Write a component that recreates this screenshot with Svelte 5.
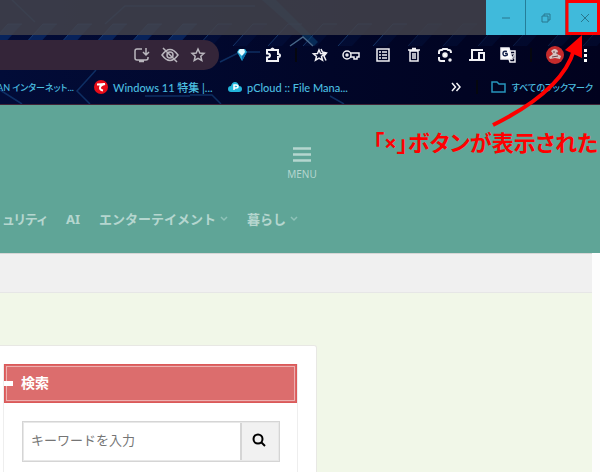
<script>
  const slashes = Array.from({ length: 18 }, (_, i) => i * 35 - 12);
</script>

<div class="screen">
  <header class="browser">
    <svg class="circuit" viewBox="0 0 600 104" preserveAspectRatio="xMinYMin slice" aria-hidden="true">
      <linearGradient id="glow" x1="0" x2="1" y1="0" y2="0">
        <stop offset="0" stop-color="#020c38" />
        <stop offset="0.55" stop-color="#010628" />
        <stop offset="1" stop-color="#01021e" />
      </linearGradient>
      <rect width="600" height="104" fill="url(#glow)" />
      {#each slashes as x}
        <path d="M{x} 46l20-22h14l-20 22z" fill="#0b2f70" opacity={x < 180 ? 0.65 : 0.15} />
        <path d="M{x} 46l20-22h14" stroke="#285d9d" fill="none" opacity={x < 400 ? 0.5 : 0.25} />
      {/each}
      <path d="M262 0h14l42 42-4 4z" fill="#0d5283" opacity=".45" />
      <path d="M290 46l13-9 10 9" stroke="#476788" fill="none" stroke-width="1.500" />
      <path d="M12 0l23 22M105 24l20-18h130M220 62l20-10h20M190 95h22l9 9M145 96h45M96 70L77 91l13 13M0 90l22 14M330 96l14 8" stroke="#174784" fill="none" stroke-width="1.500" opacity=".6" />
    </svg>

    <div class="titlebar">
      <div class="window-buttons">
        <button aria-label="Minimize"><svg viewBox="0 0 12 12" width="12" height="12"><path d="M2 6h8" /></svg></button>
        <button aria-label="Restore"><svg viewBox="0 0 12 12" width="12" height="12"><path d="M2 4h6v6H2zM4 4V2h6v6H8" /></svg></button>
        <button class="close" aria-label="Close"><svg viewBox="0 0 12 12" width="12" height="12"><path d="M2 2l8 8M10 2l-8 8" /></svg></button>
      </div>
    </div>

    <div class="toolbar">
      <div class="address">
        <button aria-label="Install"><svg viewBox="0 0 18 18"><path d="M9 3H4Q2 3 2 5v7q0 2 2 2h9q2 0 2-2v-1M6 15.500h5M13 2v7M10 6l3 3 3-3" /></svg></button>
        <button aria-label="Tracking protection"><svg viewBox="0 0 18 18"><path d="M1 9q8-11 16 0-8 11-16 0zM2 2l14 14" /><circle cx="9" cy="9" r="3" /></svg></button>
        <button aria-label="Bookmark"><svg viewBox="0 0 18 18"><path d="M9 3l1.800 4 4.200.400-3.200 2.900 1 4.200L9 12.300l-3.800 2.200 1-4.200L3 7.400 7.200 7z" /></svg></button>
      </div>
      <div class="extensions">
        <button aria-label="Gem"><svg viewBox="0 0 18 18"><path d="M4 6l2-3h6l2 3-5 9z" fill="#22a7d3" stroke="none" /><path d="M5 6l2-3h4l1 3-3 4z" fill="#e5fbff" stroke="none" /><path d="M9 10l5-4-5 9z" fill="#0c6da8" stroke="none" /></svg></button>
        <button aria-label="Extensions"><svg viewBox="0 0 18 18"><path d="M3 4h11v4q2 0 2 1.500T14 11v4H3v-3.500q3 0 3-2t-3-2z" stroke-width="2" /><path d="M7 3.500q1.500-2.500 3 0" /></svg></button>
      </div>
      <span class="rule"></span>
      <div class="pinned">
        <button aria-label="Favorites"><svg viewBox="0 0 18 18"><path d="M8 4l1.500 3.500 4 .3-3 2.600 1 3.800L8 12.200l-3.500 2 1-3.800-3-2.600 4-.3zM10 3l1.500 3 4 1-2.500 3 2 4.500" /></svg></button>
        <button aria-label="Passwords"><svg viewBox="0 0 18 18"><path d="M8.500 7H17v4h-2v2h-3v-2H8.500" /><circle cx="5" cy="9" r="4" /><circle cx="5" cy="9" r="1" /></svg></button>
        <button aria-label="Reading list"><svg viewBox="0 0 18 18"><path d="M3 3h12v12H3zM5 6h2M5 9h2M5 12h2M8 6h5M8 9h5M8 12h5" /></svg></button>
        <button aria-label="Delete"><svg viewBox="0 0 18 18"><path d="M5 5h8v10H5zM3 4h12M7 2.500h4M8 7v6M10 7v6" /></svg></button>
        <button aria-label="Lens"><svg viewBox="0 0 18 18"><path d="M3 8V6q0-2 2-2h1l1-1h4l1 1h1q2 0 2 3M3 11v2q0 2 2 2h4" stroke-width="2" /><circle cx="9" cy="9" r="2" fill="#fff" /><circle cx="14" cy="14" r="1" fill="#fff" /></svg></button>
        <button aria-label="Devices"><svg viewBox="0 0 18 18"><path d="M15 4H4v9M1 14h9M11 7h5v7h-5z" stroke-width="2" /></svg></button>
        <button aria-label="Translate"><svg viewBox="0 0 18 18"><path d="M2 2h8l3 11H2z" fill="#fff" /><path d="M11 5h5v11h-5l-1-3" /><path d="M8 5.500q-4-1-4 2t3 2q2 0 1-2H6" stroke="#17254c" /><path d="M12 8h4M14 7v1M15 9q-1 3-3 4M12.500 10l3 3" stroke-width="1" /></svg></button>
      </div>
      <span class="rule"></span>
      <div class="profile">
        <button aria-label="Profile"><svg viewBox="0 0 18 18"><circle cx="9" cy="9" r="9" fill="#c52b2c" stroke="none" /><path d="M5 5q4-4 7 0l-1 3 4 2-1 3-5-1-5 1-1-2 4-3z" fill="#d6c2c2" stroke="none" /><path d="M7 6h2M10 7h2M6 11l6-1" stroke="#6e3e46" stroke-width="1" /></svg></button>
        <button aria-label="More"><svg viewBox="0 0 18 18"><path d="M7 3h3v3H7zM7 8h3v3H7zM7 13h3v3H7z" fill="#fff" stroke="none" /></svg></button>
      </div>
    </div>

    <nav class="bookmarks" aria-label="Bookmarks">
      <a class="first" href="#internet">AN インターネット...</a>
      <a class="second" href="#windows"><svg width="14" height="14" viewBox="0 0 14 14"><circle cx="7" cy="7" r="7" fill="#e80c18" /><path d="M3 4.500l8-.5Q6 5 6 8q0 2 3 2.500" fill="none" stroke="#fff" stroke-width="2" /></svg>Windows 11 特集 |...</a>
      <a href="#pcloud"><svg width="14" height="12" viewBox="0 0 14 12"><path d="M3 11Q0 11 0 8q0-3 3-3 1-4 4-4t4 4q3 0 3 3t-3 3z" fill="#22b5da" /><path d="M6 9V4h2q2 0 2 1.500T8 7H6" fill="none" stroke="#fff" stroke-width="1.500" /></svg>pCloud :: File Mana...</a>
      <button class="more" aria-label="More bookmarks"><svg width="10" height="10" viewBox="0 0 10 10"><path d="M1 1l3.500 4L1 9M5.500 1L9 5 5.500 9" /></svg></button>
      <span class="rule"></span>
      <a class="all" href="#all"><svg width="16" height="14" viewBox="0 0 16 14"><path d="M1 2h5l2 2h6v8H1z" fill="none" stroke="#2795bd" stroke-width="1.500" /></svg>すべてのブックマーク</a>
    </nav>
  </header>

  <div class="hero">
    <button class="menu"><svg width="18" height="16" viewBox="0 0 18 16"><path d="M0 1.500h18M0 7.500h18M0 13.500h18" /></svg><span>MENU</span></button>
    <nav class="site-nav" aria-label="Categories">
      <a class="security" href="#security">ュリティ</a>
      <a href="#ai">AI</a>
      <a href="#entertainment">エンターテイメント<svg width="8" height="6" viewBox="0 0 8 6"><path d="M1 1l3 3 3-3" /></svg></a>
      <a href="#life">暮らし<svg width="8" height="6" viewBox="0 0 8 6"><path d="M1 1l3 3 3-3" /></svg></a>
    </nav>
  </div>

  <div class="body">
    <div class="crumbs"></div>
    <aside class="card">
      <section class="widget">
        <h2>検索</h2>
        <form onsubmit={(e) => e.preventDefault()}>
          <input type="text" aria-label="キーワード" placeholder="キーワードを入力" />
          <button aria-label="検索する"><svg width="14" height="14" viewBox="0 0 14 14"><circle cx="6" cy="6" r="4.500" /><path d="M9 9l4 4" /></svg></button>
        </form>
      </section>
    </aside>
  </div>

  <div class="note">
    <svg width="120" height="130" viewBox="0 0 120 130" aria-hidden="true">
      <path d="M87 1.500h31.500v32H87z" fill="none" stroke="#f00" stroke-width="3" />
      <path d="M13 125Q82 91 94 50" fill="none" stroke="#f00" stroke-width="4" />
      <path d="M102 35L85 50l17 8z" fill="#f00" />
    </svg>
    <p>「×」ボタンが表示された</p>
  </div>
</div>

<style>
  :global(body) { margin: 0; background: #f1f7e8; }
  .screen {
    position: relative;
    overflow: hidden;
    min-height: 100vh;
    display: flex;
    flex-direction: column;
    font-family: "Noto Sans", "Noto Sans CJK JP", sans-serif;
    background: #f1f7e8;
  }
  * { box-sizing: border-box; }
  button { margin: 0; padding: 0; border: 0; background: none; font: inherit; color: inherit; }
  a { color: inherit; text-decoration: none; white-space: nowrap; }
  svg { display: block; flex: none; }

  .browser { position: relative; overflow: hidden; background: #010420; border-bottom: 1px solid #402638; }
  .circuit { position: absolute; inset: 0; width: 100%; height: 100%; }
  .titlebar { position: relative; height: 35px; display: flex; justify-content: flex-end; background: rgba(67, 67, 75, .85); }
  .window-buttons { display: flex; gap: 1px; background: #257e99; }
  .window-buttons button { width: 39px; display: grid; place-items: center; background: #40badb; }
  .window-buttons .close { width: 34px; padding-left: 4px; }
  .window-buttons path { fill: none; stroke: #28778e; stroke-width: 1; }

  .toolbar { position: relative; height: 39px; padding-top: 1px; display: flex; align-items: center; }
  .toolbar svg { width: 18px; height: 18px; fill: none; stroke: #f1f1f5; stroke-width: 1.500; }
  .address {
    flex: 1;
    height: 30px;
    padding-right: 12px;
    display: flex;
    align-items: center;
    justify-content: flex-end;
    gap: 10px;
    border-radius: 0 15px 15px 0;
    background: #342539;
  }
  .address svg { stroke: #b9b6bd; }
  .extensions { margin: 0 13px 0 14px; display: flex; gap: 13px; }
  .rule { width: 2px; height: 14px; background: #05070f; }
  .pinned { width: 206px; margin: 0 13px 0 14px; display: flex; justify-content: space-between; }
  .profile { margin: 0 5px 0 14px; display: flex; gap: 13px; }

  .bookmarks {
    position: relative;
    height: 30px;
    padding: 0 7px 4px 0;
    display: flex;
    align-items: center;
    font-family: Lato, "Noto Sans CJK JP", sans-serif;
    font-size: 11px;
    font-weight: 500;
    color: #4bbfe0;
  }
  .bookmarks a { display: flex; align-items: center; gap: 5px; font-feature-settings: "palt"; }
  .bookmarks .first { width: 74px; justify-content: flex-end; font-size: 9px; }
  .bookmarks .second { width: 132px; padding-left: 20px; margin-right: 22px; }
  .more { margin: 0 15px 0 auto; }
  .more path { fill: none; stroke: #f3f3f7; stroke-width: 1.500; }
  .bookmarks .all { margin-left: 13px; font-size: 9px; }

  .hero { height: 148px; display: flex; flex-direction: column; background: #5fa597; color: #b5d6cf; }
  .menu { align-self: center; margin: 42px 0 0 4px; display: flex; flex-direction: column; align-items: center; gap: 4px; font-size: 10px; line-height: 14px; }
  .menu path { stroke: #b5d6cf; stroke-width: 2.500; }
  .site-nav { margin-top: 28px; display: flex; gap: 19px; font-size: 13px; line-height: 20px; font-weight: 700; }
  .site-nav a { display: flex; align-items: center; gap: 4px; }
  .site-nav .security { width: 47px; justify-content: flex-end; font-feature-settings: "palt"; }
  .site-nav path { fill: none; stroke: #8fc2b8; stroke-width: 1.500; }

  .body { flex: 1; border-right: 8px solid #fdfdfd; }
  .crumbs { height: 40px; background: #f0f0f0; border-top: 1px solid #d6d6d6; border-bottom: 1px solid #e6e6e6; }
  .card { width: 317px; margin-top: 52px; padding: 18px 18px 0 3px; background: #fff; border: 1px solid #e8e8e4; border-left: 0; border-radius: 0 3px 0 0; }
  .widget { border: 1px solid #eee; border-width: 0 1px; padding-bottom: 20px; }
  h2 {
    position: relative;
    height: 39px;
    margin: 0;
    padding: 0 16px 4px;
    display: flex;
    align-items: center;
    border: 1px solid #db5959;
    background: #dc6d6d;
    box-shadow: inset 0 0 0 1px #dc6666, inset 0 0 0 2px #edb0b0;
    color: #fff;
    font-size: 14px;
  }
  h2::before { content: ""; position: absolute; left: -1px; top: 16px; width: 9px; height: 5px; background: #fff; }
  form { margin: 18px 17px 0 18px; display: flex; height: 41px; border: 1px solid #d5d5d5; outline: 1px solid #e8e8e8; outline-offset: -2px; }
  input { flex: 1; min-width: 0; padding: 0 8px 3px; border: 0; background: #fff; font: inherit; font-size: 13px; }
  input::placeholder { color: #757575; opacity: 1; }
  form button { width: 39px; padding: 0 3px 4px 0; display: grid; place-items: center; border-left: 2px solid #d5d5d5; background: #f1f1f1; }
  form button svg { fill: none; stroke: #000; stroke-width: 2; }

  .note { position: absolute; top: 0; right: 0; display: flex; flex-direction: column; align-items: flex-end; pointer-events: none; }
  .note p { margin: 0 2px 0 0; color: #f00; font-size: 22px; line-height: 24px; font-weight: 700; font-feature-settings: "palt"; white-space: nowrap; }
</style>
